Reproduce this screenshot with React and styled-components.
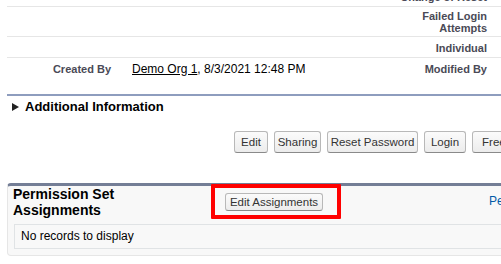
import React from "react";
import styled, { createGlobalStyle } from "styled-components";

const GlobalStyle = createGlobalStyle`
  body {
    margin: 0;
    background: #fff;
    font-family: "Liberation Sans", Arial, sans-serif;
  }
`;

const Page = styled.div`
  width: 501px;
  height: 264px;
  overflow: hidden;
`;

const Content = styled.div`
  width: 720px;
  padding-left: 7px;
`;

const Details = styled.div`
  margin-top: -14px;
`;

const Row = styled.div`
  display: grid;
  grid-template-columns: 108px 272px 104px 200px;
  align-items: center;
  min-height: 20px;
  border-bottom: 1px solid ${(p) => (p.$last ? "transparent" : "#e6e6e6")};
`;

const Label = styled.div`
  padding: 3px 4px 2px 2px;
  font-size: 11px;
  font-weight: bold;
  line-height: 12px;
  color: #4a4a56;
  text-align: right;
`;

const Value = styled.div`
  padding: 3px 4px 2px 17px;
  font-size: 12px;
  line-height: 12px;
  color: #000;
`;

const UserLink = styled.a`
  color: #000;
  text-decoration: underline;
`;

const SectionHeader = styled.div`
  display: flex;
  align-items: center;
  margin-top: 15px;
  padding: 3px 0 0 5px;
  border-top: 2px solid #8e9dbe;
  font-size: 13px;
  font-weight: bold;
  line-height: 16px;
  color: #000;
`;

const Triangle = styled.span`
  width: 0;
  height: 0;
  margin-right: 6px;
  border-top: 4px solid transparent;
  border-bottom: 4px solid transparent;
  border-left: 7px solid #222;
`;

const ButtonBar = styled.div`
  display: flex;
  gap: 6px;
  margin: 16px 0 0 227px;
`;

const Button = styled.button`
  box-sizing: border-box;
  flex: none;
  width: ${(p) => p.$w}px;
  height: ${(p) => p.$h || 22}px;
  padding: 0;
  font-family: "Liberation Sans", Arial, sans-serif;
  font-size: 11.5px;
  color: #333;
  white-space: nowrap;
  background: linear-gradient(#fbfbfb, #ececec);
  border: 1px solid #b8b8b8;
  border-bottom-color: #8a8a8a;
  border-radius: 3px;
`;

const Panel = styled.section`
  width: 640px;
  margin-top: 30px;
  padding: 0 0 6px 6px;
  background: #f8f8f8;
  border: 1px solid #e6e6e6;
  border-top: 3px solid #747e96;
  border-radius: 4px;
`;

const PanelHeader = styled.div`
  display: grid;
  grid-template-columns: 197px 130px 148px auto;
  align-items: start;
  height: 38px;
`;

const Title = styled.h3`
  margin: 0 0 0 -1px;
  font-size: 14px;
  font-weight: bold;
  line-height: 16px;
  color: #000;
`;

const Highlight = styled.div`
  display: flex;
  margin-top: -2px;
  padding: 5px 14px 4px 10px;
  border: 4px solid #f00;
  border-radius: 1px;
`;

const HelpLink = styled.a`
  margin-top: 7px;
  font-size: 12px;
  line-height: 16px;
  color: #015ba7;
  white-space: nowrap;
`;

const List = styled.div`
  padding: 0 6px;
  height: 23px;
  line-height: 23px;
  font-size: 12px;
  color: #000;
  border: 1px solid #e0e3e5;
  border-right: none;
`;

export default function App() {
  return (
    <Page>
      <GlobalStyle />
      <Content>
        <Details>
          <Row>
            <Label />
            <Value />
            <Label>Change of Reset</Label>
            <Value />
          </Row>
          <Row>
            <Label />
            <Value />
            <Label>Failed Login Attempts</Label>
            <Value />
          </Row>
          <Row>
            <Label />
            <Value />
            <Label>Individual</Label>
            <Value />
          </Row>
          <Row $last>
            <Label>Created By</Label>
            <Value>
              <UserLink>Demo Org 1</UserLink>, 8/3/2021 12:48 PM
            </Value>
            <Label>Modified By</Label>
            <Value />
          </Row>
        </Details>

        <SectionHeader>
          <Triangle />
          Additional Information
        </SectionHeader>

        <ButtonBar>
          <Button $w={34}>Edit</Button>
          <Button $w={47}>Sharing</Button>
          <Button $w={91}>Reset Password</Button>
          <Button $w={42}>Login</Button>
          <Button $w={56}>Freeze</Button>
        </ButtonBar>

        <Panel>
          <PanelHeader>
            <Title>
              Permission Set
              <br />
              Assignments
            </Title>
            <Highlight>
              <Button $w={98} $h={18}>
                Edit Assignments
              </Button>
            </Highlight>
            <span />
            <HelpLink>Permission Set Assignments Help</HelpLink>
          </PanelHeader>
          <List>No records to display</List>
        </Panel>
      </Content>
    </Page>
  );
}
